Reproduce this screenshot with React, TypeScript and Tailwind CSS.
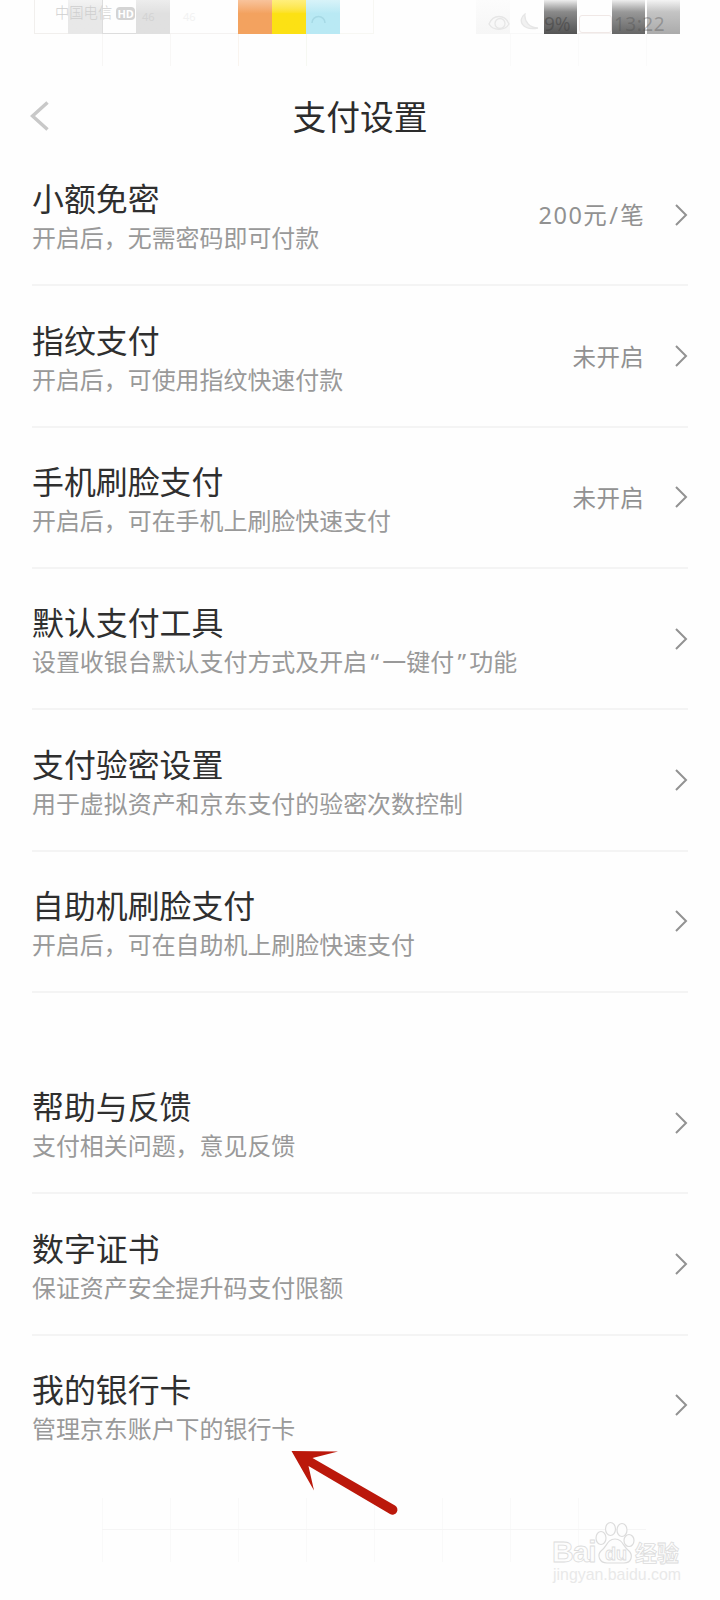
import React from "react";

type SettingItem = {
  title: string;
  desc: string;
  value?: string;
};

const paymentItems: SettingItem[] = [
  { title: "小额免密", desc: "开启后，无需密码即可付款", value: "200元/笔" },
  { title: "指纹支付", desc: "开启后，可使用指纹快速付款", value: "未开启" },
  { title: "手机刷脸支付", desc: "开启后，可在手机上刷脸快速支付", value: "未开启" },
  { title: "默认支付工具", desc: "设置收银台默认支付方式及开启“一键付”功能" },
  { title: "支付验密设置", desc: "用于虚拟资产和京东支付的验密次数控制" },
  { title: "自助机刷脸支付", desc: "开启后，可在自助机上刷脸快速支付" },
];

const serviceItems: SettingItem[] = [
  { title: "帮助与反馈", desc: "支付相关问题，意见反馈" },
  { title: "数字证书", desc: "保证资产安全提升码支付限额" },
  { title: "我的银行卡", desc: "管理京东账户下的银行卡" },
];

const StatusBar: React.FC = () => (
  <div className="relative h-[68px] shrink-0">
    {/* Mosaic tiles */}
    <div className="flex h-[34px] pl-[34px]">
      <div className="w-[34px] border-b border-l border-[#f1efed]" />
      <div className="w-[34px] bg-linear-to-b from-[#f3f3f3] to-[#e8e8e8] to-40%" />
      <div className="w-[34px] border-b border-l border-[#dddddd]" />
      <div className="w-[34px] bg-linear-to-b from-[#ededed] to-[#e0e0e0] to-40%" />
      <div className="w-[68px] border-b border-[#f4f2f1]" />
      <div className="w-[34px] bg-linear-to-b from-[#f8c39b] to-[#f3a25f] to-40%" />
      <div className="w-[34px] bg-linear-to-b from-[#ffef7c] to-[#fce114] to-40%" />
      <div className="w-[34px] bg-linear-to-b from-[#d8f3f9] to-[#b9e9f4] to-40%" />
      <div className="w-[34px] border-r border-b border-[#f7f7f3]" />
      <div className="w-[102px]" />
      <div className="w-[34px] bg-linear-to-b from-[#fcfcfc] to-[#f6f6f6]" />
      <div className="w-[34px] border-b border-[#f8f8f8]" />
      <div className="w-[33px] bg-linear-to-b from-[#eeeeee] via-[#8a8a8a] via-35% to-[#545454]" />
      <div className="w-[35px] border-b border-[#f4f1f0]" />
      <div className="w-[33px] bg-linear-to-b from-[#eeeeee] via-[#999999] via-35% to-[#666666]" />
      <div className="ml-[2px] w-[33px] bg-linear-to-b from-[#f4f4f4] via-[#c4c4c4] via-35% to-[#ababab]" />
    </div>
    {/* Seams under the tiles */}
    <div className="ml-[102px] flex h-[32px] w-[578px]">
      <div className="w-[68px] border-l border-[#f7f6f5]" />
      <div className="w-[68px] border-l border-[#f8f7f6]" />
      <div className="w-[68px] border-l border-[#f9f4ef]" />
      <div className="w-[204px] border-l border-[#f6f8f2]" />
      <div className="w-[68px] border-l border-[#fafafa]" />
      <div className="w-[68px] border-l border-[#fafafa]" />
      <div className="w-[34px] border-l border-[#fafafa]" />
    </div>
    <div className="absolute top-[4px] left-[55px] flex items-center gap-1 text-[14.3px] leading-[18px] text-[#cfcfcf]">
      <span className="font-light">中国电信</span>
      <span className="flex h-[13px] w-[19px] items-center justify-center rounded-[4px] bg-[#d4d4d4] text-[11px] leading-none font-bold text-white">
        HD
      </span>
    </div>
    <span className="absolute top-[8px] left-[142px] text-[11px] leading-[18px] text-[#d3d3d3]">46</span>
    <span className="absolute top-[8px] left-[183px] text-[11px] leading-[18px] text-[#f2f2f2]">46</span>
    <svg className="absolute top-[14px] left-[310px] h-[12px] w-[17px]" viewBox="0 0 17 12" fill="none" stroke="#a6d9e5" strokeWidth="1.5">
      <path d="M2 9a6.5 6.5 0 0 1 13 0" />
    </svg>
    <svg className="absolute top-[13px] left-[488px] h-[20px] w-[54px]" viewBox="0 0 54 20" fill="none" stroke="#e6e6e6" strokeWidth="1.3">
      <path d="M1 11C5 1 17 1 21 11C17 18 5 18 1 11Z" />
      <circle cx="12" cy="10.500" r="5" />
      <path d="M37 1C29 7 34 18 50 15C42 15 36 9 37 1Z" fill="#f1f1f1" />
    </svg>
    <div className="absolute top-[15px] left-[579px] h-[18px] w-[33px] rounded-[3px] border border-[#f0e8e6]" />
    <div className="absolute top-[10px] left-[544px] text-[19px] leading-[28px] text-[#3e3e3e]/50">9%</div>
    <div className="absolute top-[10px] left-[614px] text-[19px] leading-[28px] tracking-[0.5px] text-[#4a4a4a]/35">
      13:22
    </div>
  </div>
);

// Quotes take a wider slot than the font gives them
const renderDesc = (text: string) =>
  text.split(/([“”])/).map((part, i) =>
    part === "“" || part === "”" ? (
      <span key={i} className="inline-block w-[15.2px] text-center">
        {part}
      </span>
    ) : (
      part
    ),
  );

const renderValue = (text: string) =>
  text.split(/(\d+|\/)/).map((part, i) => {
    if (part === "/") {
      return (
        <span key={i} className="mx-[2px]">
          {part}
        </span>
      );
    }
    return /^\d+$/.test(part) ? (
      <span key={i} className="tracking-[1.5px]">
        {part}
      </span>
    ) : (
      part
    );
  });

const SettingRow: React.FC<{ item: SettingItem; last?: boolean }> = ({ item, last }) => (
  <div
    className={`mx-8 flex h-[141.35px] shrink-0 items-center border-b-2 ${last ? "border-transparent" : "border-[#f4f4f4]"}`}
  >
    <div className="flex-1 pt-[7px] whitespace-nowrap">
      <div className="h-10 text-[31.9px] leading-10 text-[#2f2f2f]">{item.title}</div>
      <div className="h-[38px] text-[23.95px] leading-[37px] text-[#999999]">{renderDesc(item.desc)}</div>
    </div>
    {item.value && (
      <span className="mt-px mr-[30px] text-[23.5px] leading-8 tracking-[0.3px] text-[#919191]">
        {renderValue(item.value)}
      </span>
    )}
    <svg className="h-[24px] w-[14px]" viewBox="0 0 14 24" fill="none" stroke="#929292" strokeWidth="2">
      <path d="M2 2L12 12L2 22" />
    </svg>
  </div>
);

const Watermark: React.FC = () => (
  <div className="absolute top-[1520px] left-[552px] h-[64px] w-[132px] text-[#fdfdfd]">
    <svg className="absolute top-0 left-[43px] h-[46px] w-[42px]" viewBox="0 0 42 46" fill="#fdfdfd" stroke="#dcdcdc" strokeWidth="1.2">
      <ellipse cx="6" cy="18" rx="5" ry="6.5" />
      <ellipse cx="15.500" cy="9" rx="5" ry="6.500" />
      <ellipse cx="27" cy="10" rx="5" ry="6.500" />
      <ellipse cx="34" cy="20.500" rx="5" ry="6" />
      <path d="M20 19C12 19 12 27 6 31C2 35 4 43 12 43C18 43 22 43 29 43C37 43 38 35 34 31C28 27 28 19 20 19Z" />
    </svg>
    <span className="absolute top-[18px] left-0 font-['Liberation_Sans'] text-[30px] leading-7 font-bold tracking-[-1px] [-webkit-text-stroke:0.8px_#dcdcdc]">
      Bai
    </span>
    <span className="absolute top-[22px] left-[53px] font-['Liberation_Sans'] text-[18px] leading-6 font-bold [-webkit-text-stroke:0.8px_#dcdcdc]">
      du
    </span>
    <span className="absolute top-[20px] left-[83px] text-[22px] leading-6 font-bold whitespace-nowrap [-webkit-text-stroke:0.8px_#dcdcdc]">
      经验
    </span>
    <span className="absolute top-[47px] left-[1px] font-['Liberation_Sans'] text-[15.9px] leading-4 text-[#e9e9e9]">
      jingyan.baidu.com
    </span>
  </div>
);

export default function App() {
  return (
    <div className="relative flex h-[1600px] w-[720px] flex-col overflow-hidden bg-[#fefefe] font-['Noto_Sans','Noto_Sans_CJK_SC',sans-serif]">
      <StatusBar />

      <header className="mt-[24px] mb-[3px] grid h-[50px] shrink-0 grid-cols-3 items-center px-[30px]">
        <svg className="-mt-[2px] h-[30px] w-[20px]" viewBox="0 0 20 30" fill="none" stroke="#c8c8c8" strokeWidth="3.5">
          <path d="M17.500 1.500L2.500 15L17.500 28.500" />
        </svg>
        <h1 className="text-center text-[33.8px] leading-[50px] whitespace-nowrap text-[#2c2c2c]">支付设置</h1>
      </header>

      {paymentItems.map((item) => (
        <SettingRow key={item.title} item={item} />
      ))}
      <div className="h-[60px] shrink-0" />
      {serviceItems.map((item, i) => (
        <SettingRow key={item.title} item={item} last={i === serviceItems.length - 1} />
      ))}

      {/* Faint grid at the bottom edge */}
      <div className="mt-[21px] ml-[102px] h-[64px] w-[544px] shrink-0">
        <div className="flex h-8 border-b border-[#f5f5f5]">
          {Array.from({ length: 8 }).map((_, i) => (
            <div key={i} className="w-[68px] border-l border-[#f9f9f9]" />
          ))}
        </div>
        <div className="flex h-8">
          {Array.from({ length: 8 }).map((_, i) => (
            <div key={i} className="w-[68px] border-l border-[#f9f9f9]" />
          ))}
        </div>
      </div>

      <svg className="absolute top-[1446px] left-[288px] h-[72px] w-[112px]" viewBox="0 0 112 72">
        <path d="M3.500 5L50 5.500L24.500 12L107 59.500A4.700 4.700 0 0 1 102 68L20.500 20L26 44.500Z" fill="#bb180b" />
      </svg>

      <Watermark />
    </div>
  );
}
